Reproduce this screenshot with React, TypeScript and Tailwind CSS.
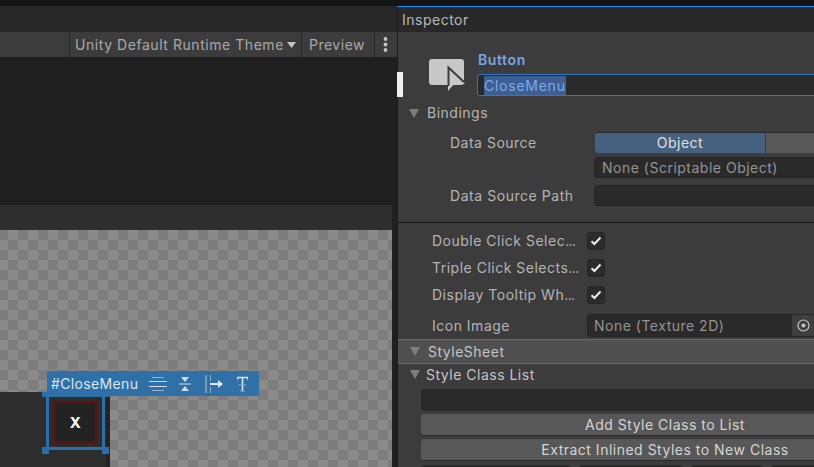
import React from 'react';

const font = { fontFamily: 'Inter, "Noto Sans", sans-serif' };

const Triangle = ({ className = '' }: { className?: string }) => (
  <svg width="10" height="9" viewBox="0 0 10 9" className={className}>
    <path d="M0 0h10L5 9z" fill="#7d7d7d" />
  </svg>
);

const Check = () => (
  <div className="flex h-[18px] w-[18px] items-center justify-center rounded-[3px] border border-[#262626] bg-[#2b2b2b]">
    <svg width="12" height="10" viewBox="0 0 12 10" fill="none">
      <path d="M1.5 5.2 4.4 8 10.5 1.5" stroke="#eeeeee" strokeWidth="2" />
    </svg>
  </div>
);

const CheckRow = ({ label }: { label: string }) => (
  <div className="flex h-[27px] items-center pb-[1px]">
    <span className="w-[155px] pl-[34px] whitespace-nowrap">
      {label}
      <span className="tracking-[-0.6px]">...</span>
    </span>
    <div className="ml-[34px]"><Check /></div>
  </div>
);

const Field = ({ children, className = '' }: { children?: React.ReactNode; className?: string }) => (
  <div className={`flex items-center rounded-[3px] border border-[#262626] bg-[#2a2a2a] ${className}`}>{children}</div>
);

const ActionButton = ({ label }: { label: string }) => (
  <div className="flex h-[22px] items-center justify-center rounded-[3px] border-b border-[#2a2a2a] bg-[#585858] text-[#d4d4d4]">{label}</div>
);

const TagIcons = () => (
  <div className="ml-[11px] flex items-center gap-[12px]">
    <svg width="18" height="18" viewBox="0 0 18 18" fill="none" strokeWidth="1">
      <path d="M3 2.5h12M3 15.5h12" stroke="#9fb4c6" />
      <path d="M0 6.5h18M0 11.5h18" stroke="#d3dbe2" />
    </svg>
    <svg width="12" height="14" viewBox="0 0 12 14">
      <path d="M2 0h8L6 5zM6 9l4 5H2z" fill="#d5dde4" />
      <path d="M0 7h12" stroke="#d5dde4" strokeWidth="1" />
    </svg>
    <svg width="18" height="18" viewBox="0 0 18 18" className="ml-[2px]" fill="none">
      <path d="M1 0v18" stroke="#b4c3d0" strokeWidth="1" />
      <path d="M5.5 0v6M5.5 12v6" stroke="#8fa9be" strokeWidth="1" />
      <path d="M5 9h9" stroke="#e2e8ee" strokeWidth="2" />
      <path d="M13 5l5 4-5 4z" fill="#e2e8ee" />
    </svg>
    <svg width="11" height="16" viewBox="0 0 11 16" className="ml-[2px]" fill="none">
      <path d="M.5 3.5V1.5h10v2M5.5 1.5V15" stroke="#dde4ea" strokeWidth="1.6" />
      <path d="M3 15h5M1.5 9h8" stroke="#8fa9be" strokeWidth="1" />
    </svg>
  </div>
);

const CanvasOverlay = () => (
  <>
    <div className="absolute left-0 top-[162px] h-[75px] w-[110px] border-r-4 border-[#242424] bg-[#2d2d2d]" />
    <div className="absolute left-[54px] top-[171px] flex h-[43px] w-[43px] items-center justify-center border-2 border-[#5e1111] bg-[#232323] text-[15px] font-bold text-white">
      X
    </div>
    <div className="absolute left-[46px] top-[163px] h-[57px] w-[59px] border-[3px] border-[#2d6ea6]" />
    <div className="absolute left-[42px] top-[162px] h-[5px] w-[67px] bg-[#2d6ea6]" />
    <div className="absolute left-[42px] top-[217px] h-[7px] w-[7px] bg-[#2d6ea6]" />
    <div className="absolute left-[102px] top-[217px] h-[7px] w-[7px] bg-[#2d6ea6]" />
    <div className="absolute left-[47px] top-[141px] flex h-[25px] w-[212px] items-center bg-[#2f70a8] pl-[4px] tracking-[0.35px] text-[#dfe7ee]">
      #CloseMenu
      <TagIcons />
    </div>
  </>
);

export default function App() {
  return (
    <div style={font} className="flex h-[467px] w-[814px] flex-col overflow-hidden bg-[#141414] text-[14px] leading-none tracking-[0.5px] text-[#b4b4b4]">
      <div className="h-[6px] shrink-0" />
      <div className="flex min-h-0 flex-1">
        {/* left panel */}
        <div className="flex w-[397px] shrink-0 flex-col bg-[#202020]">
          <div className="h-[26px] shrink-0 bg-[#282828]" />
          <div className="flex h-[25px] shrink-0 gap-px bg-[#282828]">
            <div className="w-[69px] bg-[#3c3c3c]" />
            <div className="flex w-[231px] items-center gap-[3px] bg-[#3c3c3c] pl-[5px] whitespace-nowrap tracking-[0.55px] text-[#a8a8a8]">
              Unity Default Runtime Theme
              <svg width="9" height="6" viewBox="0 0 9 6"><path d="M0 0h9L4.5 6z" fill="#c4c4c4" /></svg>
            </div>
            <div className="flex w-[72px] items-center bg-[#3c3c3c] pl-[7px] text-[#a8a8a8]">Preview</div>
            <div className="flex flex-1 items-center justify-center bg-[#3c3c3c] pr-[2px]">
              <svg width="5" height="15" viewBox="0 0 5 15" fill="#c4c4c4">
                <circle cx="2.5" cy="2" r="1.9" /><circle cx="2.5" cy="7.5" r="1.9" /><circle cx="2.5" cy="13" r="1.9" />
              </svg>
            </div>
          </div>
          <div className="h-[148px] shrink-0" />
          <div className="h-[25px] w-[392px] shrink-0 bg-[#2e2e2e]" />
          <div className="relative w-[392px] flex-1 bg-[#858585] bg-[repeating-conic-gradient(#7d7d7d_0%_25%,#8a8a8a_0%_50%)] bg-[length:20px_20px] bg-[position:8px_0px]">
            <CanvasOverlay />
          </div>
        </div>

        {/* inspector */}
        <div className="relative flex w-[520px] shrink-0 flex-col border-l border-[#1c1c1c] bg-[#3c3c3c]">
          <div className="absolute -left-px top-0 h-px w-full bg-[#1f8fff]" />
          <div className="absolute -left-px top-[66px] h-[25px] w-[6px] bg-[#efefef]" />
          <div className="flex h-[26px] shrink-0 items-center bg-[#282828] pl-[4px] pt-[1px] text-[#b8b8b8]">Inspector</div>

          {/* header */}
          <div className="flex h-[68px] shrink-0 pl-[31px] pt-[27px]">
            <svg width="36" height="32" viewBox="0 0 36 32" className="shrink-0">
              <rect x="0" y="0" width="35" height="26" rx="3" fill="#c8c8c8" />
              <path d="M19 8v24l6-7h11z" fill="#c8c8c8" />
              <path d="M19.5 27V8.5L35 23" fill="none" stroke="#3c3c3c" strokeWidth="2" />
            </svg>
            <div className="ml-[12px] flex flex-1 flex-col">
              <div className="-mt-[9px] h-[24px] pl-[1px] font-semibold leading-[20px] tracking-[0.6px] text-[#7aa5e6]">Button</div>
              <div className="flex h-[22px] shrink-0 items-center rounded-[3px] border border-[#2f77c0] bg-[#2a2a2a] pl-[6px] pt-[1px]">
                <span className="bg-[#3d5f94] py-[2.5px] tracking-[0.75px] text-[#7ea9e8]">CloseMenu</span>
              </div>
            </div>
          </div>

          <div className="flex h-[26px] shrink-0 items-center gap-[8px] pl-[11px]">
            <Triangle /> Bindings
          </div>

          <div className="flex h-[27px] shrink-0 items-center pl-[52px] pt-[6px]">
            <span className="w-[145px]">Data Source</span>
            <div className="flex h-[21px] flex-1 overflow-hidden rounded-[3px] border-t border-[#262626]">
              <div className="flex w-[170px] items-center justify-center bg-[#46607f] text-[#e0e0e0]">Object</div>
              <div className="ml-px flex-1 bg-[#585858]" />
            </div>
          </div>
          <div className="flex h-[25px] shrink-0 items-center pl-[196px] pt-[4px]">
            <Field className="h-[21px] flex-1 pl-[7px] text-[#949494]">None (Scriptable Object)</Field>
          </div>
          <div className="flex h-[28px] shrink-0 items-center pl-[52px] pt-[7px]">
            <span className="w-[144px] whitespace-nowrap tracking-[0.55px]">Data Source Path</span>
            <Field className="h-[21px] flex-1" />
          </div>

          <div className="mt-[16px] h-px shrink-0 bg-[#191919]" />

          <div className="shrink-0 pt-[5px]">
            <CheckRow label="Double Click Selec" />
            <CheckRow label="Triple Click Selects" />
            <CheckRow label="Display Tooltip Wh" />
          </div>
          <div className="flex h-[28px] shrink-0 items-center pl-[34px] pt-[5px]">
            <span className="w-[155px]">Icon Image</span>
            <Field className="h-[23px] flex-1 justify-between overflow-hidden pl-[6px] text-[#949494]">
              None (Texture 2D)
              <div className="mr-[102px] flex h-full w-[22px] items-center justify-center bg-[#3f3f3f]">
                <svg width="13" height="13" viewBox="0 0 13 13" fill="none">
                  <circle cx="6.5" cy="6.5" r="5.5" stroke="#c4c4c4" strokeWidth="1.2" />
                  <circle cx="6.5" cy="6.5" r="2" fill="#c4c4c4" />
                </svg>
              </div>
            </Field>
          </div>

          <div className="mt-[2px] flex h-[24px] shrink-0 items-center gap-[8px] border-t border-[#6a6a6a] bg-[#505050] pl-[12px] text-[#c4c4c4]">
            <Triangle /> StyleSheet
          </div>
          <div className="flex h-[26px] shrink-0 items-center gap-[6px] border-t border-[#6a6a6a] pb-[4px] pl-[12px] text-[#c4c4c4]">
            <Triangle /> Style Class List
          </div>
          <div className="flex shrink-0 flex-col pl-[23px] pr-[8px]">
            <Field className="h-[22px]" />
            <div className="mt-[3px] flex flex-col gap-[3px]">
              <ActionButton label="Add Style Class to List" />
              <ActionButton label="Extract Inlined Styles to New Class" />
            </div>
            <div className="mt-[4px] flex h-[6px] gap-[8px]">
              <div className="w-[150px] rounded-t-[3px] bg-[#2a2a2a]" />
              <div className="w-[104px] rounded-t-[3px] bg-[#2a2a2a]" />
              <div className="w-[72px] rounded-t-[3px] bg-[#2a2a2a]" />
              <div className="w-[72px] rounded-t-[3px] bg-[#2a2a2a]" />
            </div>
          </div>
        </div>
      </div>
    </div>
  );
}
